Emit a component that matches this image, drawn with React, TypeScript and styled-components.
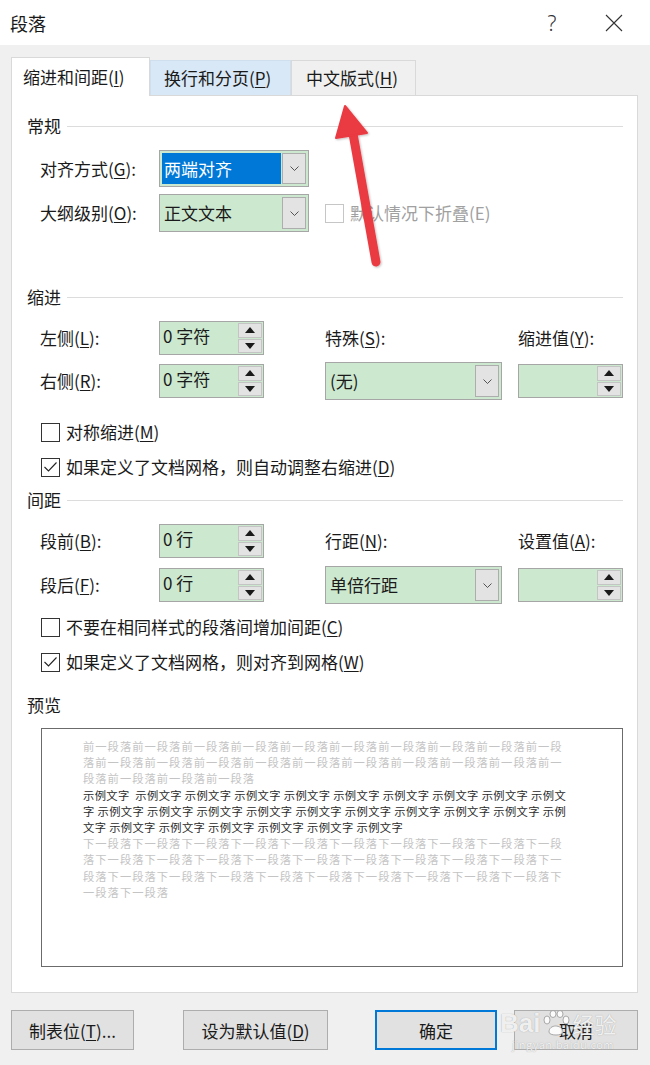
import React from 'react';
import styled, { createGlobalStyle, css } from 'styled-components';

const GlobalStyle = createGlobalStyle`
  html, body {
    margin: 0;
    padding: 0;
    background: #f0f0f0;
  }
  body {
    font-family: "Noto Sans CJK SC", "Noto Sans", sans-serif;
    color: #1a1a1a;
  }
`;

const FONT = `"Noto Sans CJK SC", "Noto Sans", sans-serif`;

const Dialog = styled.div`
  position: relative;
  width: 650px;
  height: 1065px;
  background: #f0f0f0;
  overflow: hidden;
  display: flex;
  flex-direction: column;
`;

const TitleBar = styled.div`
  height: 45px;
  background: #ffffff;
  display: flex;
  align-items: center;
  padding-left: 10px;
  box-sizing: border-box;
`;

const TitleText = styled.div`
  font-size: 18px;
  line-height: 24px;
  flex: 1;
`;

const HelpButton = styled.div`
  width: 30px;
  text-align: center;
  font-family: "Noto Sans", sans-serif;
  font-weight: 300;
  font-size: 21px;
  line-height: 24px;
  color: #333;
  margin-right: 38px;
`;

const CloseButton = styled.div`
  width: 18px;
  height: 18px;
  margin-right: 27px;
  display: flex;
`;

const Body = styled.div`
  padding: 12px 0 0 11px;
`;

const TabList = styled.div`
  display: flex;
  align-items: flex-end;
  height: 38px;
  position: relative;
  z-index: 1;
`;

type TabState = 'active' | 'hover' | 'idle';

const Tab = styled.div<{ $state: TabState; $w: number }>`
  width: ${(p) => p.$w}px;
  box-sizing: border-box;
  font-size: 17px;
  line-height: 22px;
  display: flex;
  align-items: center;
  padding-left: 11px;
  border: 1px solid #d9d9d9;
  border-bottom: none;
  ${(p) =>
    p.$state === 'active'
      ? css`
          height: 39px;
          margin-bottom: -1px;
          background: #ffffff;
        `
      : p.$state === 'hover'
        ? css`
            height: 35px;
            background: #d9e8f6;
            border-color: #d0dfee;
            padding-left: 13px;
          `
        : css`
            height: 35px;
            background: #f0f0f0;
            padding-left: 14px;
          `}
`;

const Panel = styled.div`
  width: 627px;
  height: 898px;
  box-sizing: border-box;
  background: #ffffff;
  border: 1px solid #d9d9d9;
  padding: 19px 14px 0 15px;
`;

const SectionHeader = styled.div<{ $top: number; $line?: boolean }>`
  margin-top: ${(p) => p.$top}px;
  height: 22px;
  font-size: 17px;
  line-height: 22px;
  display: flex;
  align-items: center;
  gap: 6px;
  ${(p) =>
    p.$line !== false &&
    css`
      &::after {
        content: '';
        flex: 1;
        height: 1px;
        background: #dcdcdc;
      }
    `}
`;

const FieldGrid = styled.div<{ $top: number; $rows: string; $gap: number }>`
  margin-top: ${(p) => p.$top}px;
  margin-left: 13px;
  display: grid;
  grid-template-columns: 119px 166px 193px 105px;
  grid-template-rows: ${(p) => p.$rows};
  row-gap: ${(p) => p.$gap}px;
  align-items: center;
`;

const Label = styled.div<{ $disabled?: boolean }>`
  font-size: 17px;
  line-height: 22px;
  white-space: nowrap;
  color: ${(p) => (p.$disabled ? '#a0a0a0' : '#1a1a1a')};
`;

const U = styled.span`
  text-decoration: underline;
  text-underline-offset: 2px;
`;

const SelectBox = styled.div<{ $w: number; $h: number }>`
  width: ${(p) => p.$w}px;
  height: ${(p) => p.$h}px;
  box-sizing: border-box;
  border: 1px solid #a6a6a6;
  background: #cce8cf;
  display: flex;
  align-items: stretch;
  padding: 2px;
  gap: 1px;
`;

const SelectValue = styled.div<{ $selected?: boolean }>`
  flex: 1;
  font-size: 17px;
  line-height: 22px;
  display: flex;
  align-items: center;
  padding-left: 2px;
  ${(p) =>
    p.$selected &&
    css`
      background: #0078d7;
      color: #ffffff;
    `}
`;

const DropButton = styled.div`
  width: 24px;
  box-sizing: border-box;
  background: #e3e3e3;
  border: 1px solid #adadad;
  display: flex;
  align-items: center;
  justify-content: center;
`;

const SpinBox = styled.div`
  width: 105px;
  height: 34px;
  box-sizing: border-box;
  border: 1px solid #a6a6a6;
  background: #cce8cf;
  display: flex;
  padding: 1px 1px 1px 0;
`;

const SpinValue = styled.div`
  flex: 1;
  font-size: 17px;
  line-height: 22px;
  padding: 2px 0 0 3px;
`;

const SpinButtons = styled.div`
  width: 24px;
  display: flex;
  flex-direction: column;
  gap: 1px;
`;

const SpinButton = styled.div`
  flex: 1;
  background: #e3e3e3;
  border: 1px solid #c4c4c4;
  box-sizing: border-box;
  display: flex;
  align-items: center;
  justify-content: center;
`;

const CheckRow = styled.label<{ $top: number; $indent?: number }>`
  margin-top: ${(p) => p.$top}px;
  margin-left: ${(p) => p.$indent ?? 14}px;
  height: 26px;
  display: flex;
  align-items: center;
  gap: 6px;
`;

const CheckBox = styled.div<{ $disabled?: boolean }>`
  width: 19px;
  height: 19px;
  box-sizing: border-box;
  border: 1px solid ${(p) => (p.$disabled ? '#c6c6c6' : '#333333')};
  background: #ffffff;
  display: flex;
  align-items: center;
  justify-content: center;
`;

const PreviewBox = styled.div`
  margin-top: 12px;
  margin-left: 14px;
  width: 582px;
  height: 239px;
  box-sizing: border-box;
  border: 1px solid #6b6b6b;
  padding: 9px 0 0 41px;
  overflow: hidden;
`;

const PreviewLine = styled.div<{ $sample?: boolean }>`
  font-size: 11.3px;
  line-height: 16.2px;
  white-space: pre;
  ${(p) =>
    p.$sample
      ? css`
          color: #2a2a2a;
          letter-spacing: 0.35px;
        `
      : css`
          color: #c4c4c4;
          letter-spacing: 1px;
        `}
`;

const ButtonRow = styled.div`
  margin-top: 17px;
  display: flex;
  padding-left: 11px;
`;

const Button = styled.div<{ $w: number; $gap: number; $default?: boolean }>`
  width: ${(p) => p.$w}px;
  height: 40px;
  margin-right: ${(p) => p.$gap}px;
  box-sizing: border-box;
  background: #e1e1e1;
  border: ${(p) => (p.$default ? '2px solid #0078d7' : '1px solid #adadad')};
  font-size: 17px;
  display: flex;
  align-items: center;
  justify-content: center;
`;

const Watermark = styled.div`
  position: absolute;
  left: 500px;
  top: 1008px;
  color: rgba(255, 255, 255, 0.85);
  text-shadow: 0 0 1px #9a9a9a;
  font-family: ${FONT};
  pointer-events: none;
`;

const WatermarkBrand = styled.div`
  display: flex;
  align-items: center;
  font-size: 26px;
  line-height: 30px;
  font-family: "Liberation Sans", sans-serif;
  font-weight: 700;
  gap: 1px;
`;

const WatermarkSub = styled.div`
  font-size: 11px;
  line-height: 13px;
  margin-left: 12px;
  letter-spacing: 0.4px;
`;

const ArrowLayer = styled.svg`
  position: absolute;
  left: 0;
  top: 0;
  pointer-events: none;
`;

const Chevron = () => (
  <svg width="9" height="5" viewBox="0 0 9 5">
    <path d="M0.5 0.5 L4.5 4.5 L8.5 0.5" fill="none" stroke="#444" strokeWidth="0.9" />
  </svg>
);

const Tri = ({ up }: { up?: boolean }) => (
  <svg width="10" height="6" viewBox="0 0 10 6">
    <path d={up ? 'M0 6 L5 0 L10 6 Z' : 'M0 0 L5 6 L10 0 Z'} fill="#1a1a1a" />
  </svg>
);

const Tick = () => (
  <svg width="15" height="12" viewBox="0 0 15 12">
    <path d="M1.5 6 L5.5 10 L13.5 1.5" fill="none" stroke="#222" strokeWidth="1.1" />
  </svg>
);

const Select = ({
  value,
  width,
  height,
  selected,
}: {
  value: string;
  width: number;
  height: number;
  selected?: boolean;
}) => (
  <SelectBox $w={width} $h={height}>
    <SelectValue $selected={selected}>{value}</SelectValue>
    <DropButton>
      <Chevron />
    </DropButton>
  </SelectBox>
);

const Spin = ({ value }: { value?: string }) => (
  <SpinBox>
    <SpinValue>{value}</SpinValue>
    <SpinButtons>
      <SpinButton>
        <Tri up />
      </SpinButton>
      <SpinButton>
        <Tri />
      </SpinButton>
    </SpinButtons>
  </SpinBox>
);

const Check = ({
  checked,
  children,
  top,
}: {
  checked?: boolean;
  children: React.ReactNode;
  top: number;
}) => (
  <CheckRow $top={top}>
    <CheckBox>{checked && <Tick />}</CheckBox>
    <Label>{children}</Label>
  </CheckRow>
);

const before1 = '前一段落'.repeat(9) + '前一段';
const before2 = '落' + '前一段落'.repeat(9) + '前一';
const before3 = '段落前一段落前一段落前一段落';
const group = '示例文字';
const sample1 = group + '  ' + Array(8).fill(group).join(' ') + ' 示例文';
const sample2 = '字 ' + Array(9).fill(group).join(' ') + ' 示例';
const sample3 = '文字 ' + Array(6).fill(group).join(' ');
const after1 = '下一段落'.repeat(9) + '下一段';
const after2 = '落' + '下一段落'.repeat(9) + '下一';
const after3 = '段落' + '下一段落'.repeat(9) + '下';
const after4 = '一段落下一段落';

const App = () => {
  return (
    <Dialog>
      <GlobalStyle />
      <TitleBar>
        <TitleText>段落</TitleText>
        <HelpButton>?</HelpButton>
        <CloseButton>
          <svg width="18" height="18" viewBox="0 0 18 18">
            <path d="M1 1 L17 17 M17 1 L1 17" stroke="#333" strokeWidth="1.1" />
          </svg>
        </CloseButton>
      </TitleBar>

      <Body>
        <TabList>
          <Tab $state="active" $w={139}>
            缩进和间距(<U>I</U>)
          </Tab>
          <Tab $state="hover" $w={141}>
            换行和分页(<U>P</U>)
          </Tab>
          <Tab $state="idle" $w={125}>
            中文版式(<U>H</U>)
          </Tab>
        </TabList>

        <Panel>
          <SectionHeader $top={0}>常规</SectionHeader>
          <FieldGrid $top={13} $rows="37px 38px" $gap={7}>
            <Label>
              对齐方式(<U>G</U>):
            </Label>
            <Select value="两端对齐" width={150} height={37} selected />
            <div />
            <div />
            <Label>
              大纲级别(<U>O</U>):
            </Label>
            <Select value="正文文本" width={150} height={38} />
            <CheckRow $top={0} $indent={0}>
              <CheckBox $disabled />
              <Label $disabled>默认情况下折叠(E)</Label>
            </CheckRow>
            <div />
          </FieldGrid>

          <SectionHeader $top={54}>缩进</SectionHeader>
          <FieldGrid $top={13} $rows="34px 38px" $gap={7}>
            <Label>
              左侧(<U>L</U>):
            </Label>
            <Spin value="0 字符" />
            <Label>
              特殊(<U>S</U>):
            </Label>
            <Label>
              缩进值(<U>Y</U>):
            </Label>
            <Label>
              右侧(<U>R</U>):
            </Label>
            <Spin value="0 字符" />
            <Select value="(无)" width={177} height={38} />
            <Spin />
          </FieldGrid>
          <Check top={19}>
            对称缩进(<U>M</U>)
          </Check>
          <Check top={9} checked>
            如果定义了文档网格，则自动调整右缩进(<U>D</U>)
          </Check>

          <SectionHeader $top={9}>间距</SectionHeader>
          <FieldGrid $top={13} $rows="34px 38px" $gap={8}>
            <Label>
              段前(<U>B</U>):
            </Label>
            <Spin value="0 行" />
            <Label>
              行距(<U>N</U>):
            </Label>
            <Label>
              设置值(<U>A</U>):
            </Label>
            <Label>
              段后(<U>F</U>):
            </Label>
            <Spin value="0 行" />
            <Select value="单倍行距" width={177} height={38} />
            <Spin />
          </FieldGrid>
          <Check top={10}>
            不要在相同样式的段落间增加间距(<U>C</U>)
          </Check>
          <Check top={9} checked>
            如果定义了文档网格，则对齐到网格(<U>W</U>)
          </Check>

          <SectionHeader $top={19} $line={false}>
            预览
          </SectionHeader>
          <PreviewBox>
            <PreviewLine>{before1}</PreviewLine>
            <PreviewLine>{before2}</PreviewLine>
            <PreviewLine>{before3}</PreviewLine>
            <PreviewLine $sample>{sample1}</PreviewLine>
            <PreviewLine $sample>{sample2}</PreviewLine>
            <PreviewLine $sample>{sample3}</PreviewLine>
            <PreviewLine>{after1}</PreviewLine>
            <PreviewLine>{after2}</PreviewLine>
            <PreviewLine>{after3}</PreviewLine>
            <PreviewLine>{after4}</PreviewLine>
          </PreviewBox>
        </Panel>
      </Body>

      <ButtonRow>
        <Button $w={123} $gap={49}>
          制表位(<U>T</U>)...
        </Button>
        <Button $w={145} $gap={47}>
          设为默认值(<U>D</U>)
        </Button>
        <Button $w={122} $gap={17} $default>
          确定
        </Button>
        <Button $w={124} $gap={0}>
          取消
        </Button>
      </ButtonRow>

      <Watermark>
        <WatermarkBrand>
          Bai
          <svg width="30" height="26" viewBox="0 0 30 26">
            <g fill="rgba(255,255,255,0.85)" stroke="rgba(150,150,150,0.8)" strokeWidth="1">
              <ellipse cx="6" cy="10" rx="3" ry="4" />
              <ellipse cx="12" cy="4" rx="3" ry="3.5" />
              <ellipse cx="19" cy="4" rx="3" ry="3.5" />
              <ellipse cx="25" cy="10" rx="3" ry="4" />
              <path d="M8 22 C8 14 21 14 22 22 C22 26 8 26 8 22 Z" />
            </g>
          </svg>
          <span style={{ fontFamily: FONT, fontSize: 22, fontWeight: 400 }}>经验</span>
        </WatermarkBrand>
        <WatermarkSub>jingyan.baidu.com</WatermarkSub>
      </Watermark>

      <ArrowLayer width="650" height="1065" viewBox="0 0 650 1065">
        <defs>
          <filter id="sh" x="-20%" y="-20%" width="140%" height="140%">
            <feDropShadow dx="1" dy="1" stdDeviation="1" floodColor="#000" floodOpacity="0.25" />
          </filter>
        </defs>
        <g filter="url(#sh)" fill="#ea3a42" stroke="#ea3a42">
          <path d="M376 262 L352 128" strokeWidth="9" strokeLinecap="round" fill="none" />
          <path d="M345 106 L336 138 L367 133 Z" strokeWidth="2" strokeLinejoin="round" />
        </g>
      </ArrowLayer>
    </Dialog>
  );
};

export default App;
